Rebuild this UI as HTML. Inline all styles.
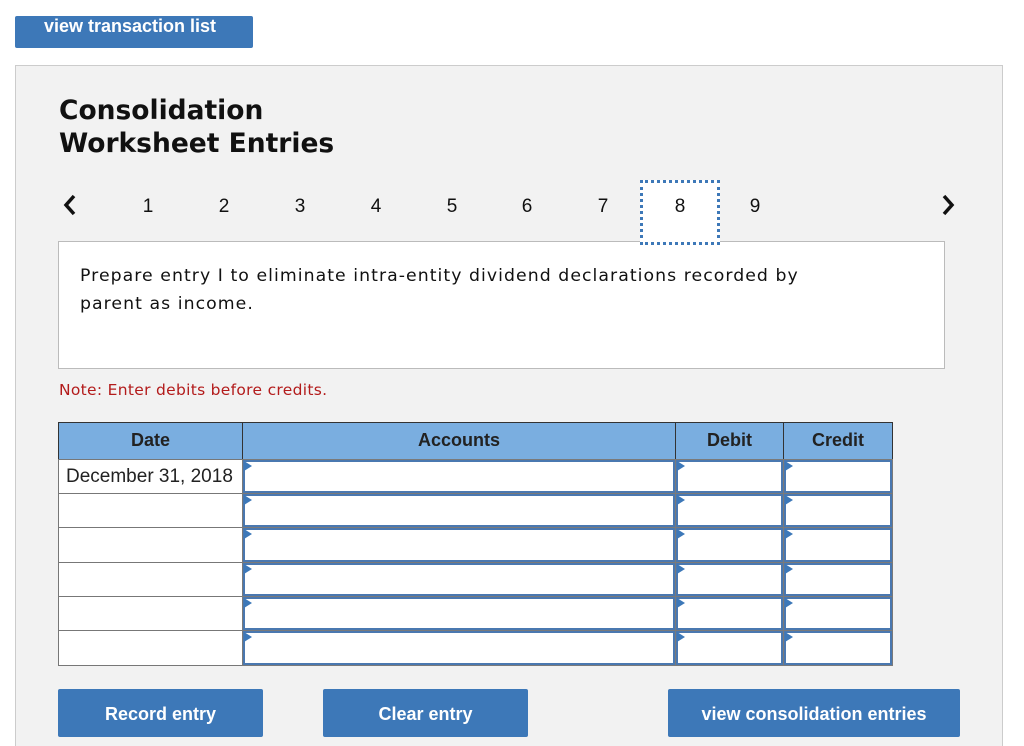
<!DOCTYPE html>
<html><head><meta charset="utf-8"><style>
*{margin:0;padding:0;box-sizing:border-box}
html,body{width:1024px;height:746px;overflow:hidden}
body{background:#fff;position:relative;font-family:"Liberation Sans",Arial,sans-serif}
.a{position:absolute}
.btn{position:absolute;background:#3d78b8;color:#fff;font-weight:bold;font-size:18px;text-align:center;border-radius:2px}
.num{position:absolute;top:196px;font-size:19px;color:#111;width:20px;text-align:center}
.c{position:absolute;border:1px solid #777;background:#fff}
.h{position:absolute;background:#7aaee0;border:1px solid #333;font-weight:bold;font-size:18px;text-align:center;line-height:34px;color:#222}
.in{position:absolute;border:2px solid #4a78b0;background:#fff}
.in:before{content:"";position:absolute;left:-1px;top:-1px;border-left:8px solid #3d78b8;border-top:5px solid transparent;border-bottom:5px solid transparent}
</style></head><body>
<div class="btn" style="left:15px;top:16px;width:238px;height:32px;line-height:20px;text-align:left;padding-left:29px;font-size:18px">view transaction list</div>
<div class="a" style="left:15px;top:65px;width:988px;height:700px;background:#f2f2f2;border:1px solid #ccc"></div>
<div class="a" style="left:59px;top:94px;font-family:'DejaVu Sans',Verdana,sans-serif;font-weight:bold;font-size:26.5px;line-height:33px;color:#111">Consolidation<br>Worksheet Entries</div>
<svg class="a" style="left:60px;top:192px" width="20" height="26"><path d="M14 4 L6 13 L14 22" stroke="#111" stroke-width="3.5" fill="none"/></svg>
<svg class="a" style="left:938px;top:192px" width="20" height="26"><path d="M6 4 L14 13 L6 22" stroke="#111" stroke-width="3.5" fill="none"/></svg>
<div class="num" style="left:138px">1</div><div class="num" style="left:214px">2</div><div class="num" style="left:290px">3</div><div class="num" style="left:366px">4</div><div class="num" style="left:442px">5</div><div class="num" style="left:517px">6</div><div class="num" style="left:593px">7</div><div class="num" style="left:745px">9</div>
<div class="a" style="left:58px;top:241px;width:887px;height:128px;background:#fff;border:1px solid #bbb"></div>
<div class="a" style="left:640px;top:180px;width:80px;height:65px;background:#fff;border:3px dotted #3d78b8"></div>
<div class="num" style="left:670px">8</div>
<div class="a" style="left:80px;top:262px;width:780px;font-family:'DejaVu Sans',Verdana,sans-serif;font-size:17.3px;letter-spacing:1.05px;line-height:28px;color:#111">Prepare entry I to eliminate intra-entity dividend declarations recorded by parent as income.</div>
<div class="a" style="left:59px;top:381px;font-family:'DejaVu Sans',Verdana,sans-serif;font-size:15.5px;letter-spacing:0.3px;color:#b31b1b">Note: Enter debits before credits.</div>
<div class="h" style="left:58px;top:422px;width:185px;height:38px">Date</div>
<div class="h" style="left:242px;top:422px;width:434px;height:38px">Accounts</div>
<div class="h" style="left:675px;top:422px;width:109px;height:38px">Debit</div>
<div class="h" style="left:783px;top:422px;width:110px;height:38px">Credit</div>
<div class="c" style="left:58px;top:459px;width:185px;height:35px;font-size:19px;line-height:33px;padding-left:7px;color:#222;white-space:nowrap">December 31, 2018</div>
<div class="c" style="left:58px;top:493px;width:185px;height:35px"></div>
<div class="c" style="left:58px;top:527px;width:185px;height:36px"></div>
<div class="c" style="left:58px;top:562px;width:185px;height:35px"></div>
<div class="c" style="left:58px;top:596px;width:185px;height:35px"></div>
<div class="c" style="left:58px;top:630px;width:185px;height:36px"></div>
<div class="a" style="left:242px;top:459px;width:651px;height:207px;background:#7a7a7a"></div>
<div class="in" style="left:243px;top:460px;width:432px;height:33px"></div><div class="in" style="left:676px;top:460px;width:107px;height:33px"></div><div class="in" style="left:784px;top:460px;width:108px;height:33px"></div>
<div class="in" style="left:243px;top:494px;width:432px;height:33px"></div><div class="in" style="left:676px;top:494px;width:107px;height:33px"></div><div class="in" style="left:784px;top:494px;width:108px;height:33px"></div>
<div class="in" style="left:243px;top:528px;width:432px;height:34px"></div><div class="in" style="left:676px;top:528px;width:107px;height:34px"></div><div class="in" style="left:784px;top:528px;width:108px;height:34px"></div>
<div class="in" style="left:243px;top:563px;width:432px;height:33px"></div><div class="in" style="left:676px;top:563px;width:107px;height:33px"></div><div class="in" style="left:784px;top:563px;width:108px;height:33px"></div>
<div class="in" style="left:243px;top:597px;width:432px;height:33px"></div><div class="in" style="left:676px;top:597px;width:107px;height:33px"></div><div class="in" style="left:784px;top:597px;width:108px;height:33px"></div>
<div class="in" style="left:243px;top:631px;width:432px;height:34px"></div><div class="in" style="left:676px;top:631px;width:107px;height:34px"></div><div class="in" style="left:784px;top:631px;width:108px;height:34px"></div>
<div class="btn" style="left:58px;top:689px;width:205px;height:48px;line-height:50px">Record entry</div>
<div class="btn" style="left:323px;top:689px;width:205px;height:48px;line-height:50px">Clear entry</div>
<div class="btn" style="left:668px;top:689px;width:292px;height:48px;line-height:50px">view consolidation entries</div>
</body></html>
